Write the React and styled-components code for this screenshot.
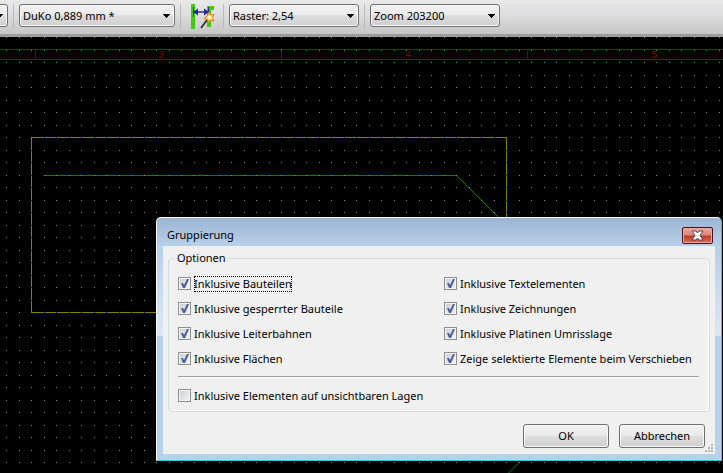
import * as React from "react";
import styled, {createGlobalStyle} from "styled-components";

const GlobalStyle = createGlobalStyle`
    * {
        box-sizing: border-box;
    }

    body {
        margin: 0;
        background: #000;
        color: #000;
    }

    body, select, button {
        font-family: "Noto Sans", "Open Sans", sans-serif;
        font-size: 11px;
        line-height: 16px;
    }
`;

const Page = styled.div`
    display: flex;
    flex-direction: column;
    min-height: 100vh;
    overflow: hidden;
`;

const Toolbar = styled.div`
    display: flex;
    flex: none;
    align-items: flex-start;
    gap: 5px;
    height: 37px;
    padding-top: 4px;
    overflow: hidden;
    background: linear-gradient(#e9e9e9, #dedee0 40%, #c6c6c6);
    border-bottom: 3px solid #9c9e9b;
`;

const Separator = styled.div`
    flex: none;
    width: 1px;
    height: 24px;
    background: #bababa;
`;

const Combo = styled.div`
    position: relative;
    flex: none;
    width: ${p => p.$width}px;
    margin-left: ${p => p.$clipped ? "-122px" : "0"};

    select {
        display: block;
        width: 100%;
        height: 23px;
        padding: 0 16px 0 3px;
        appearance: none;
        border: 1px solid #707070;
        border-radius: 3px;
        outline: none;
        background: linear-gradient(#f4f2f4, #ebebeb 48%, #dddddd 52%, #cfcfcf);
        box-shadow: inset 0 0 0 1px #f8f8f8;
        color: #000;
    }

    svg {
        position: absolute;
        top: 10px;
        right: 5px;
        pointer-events: none;
    }
`;

const ToolButton = styled.button`
    flex: none;
    width: 32px;
    height: 26px;
    padding: 0;
    border: none;
    background: none;

    svg {
        display: block;
        margin: 0 auto;
    }
`;

const Canvas = styled.div`
    position: relative;
    flex: 1;
    min-height: 436px;
    background: #000;
`;

const Board = styled.svg`
    position: absolute;
    top: 0;
    left: 0;
    width: 100%;
    height: 100%;

    text {
        font-family: "Liberation Mono", monospace;
        font-size: 10px;
        fill: #840000;
    }
`;

const Dialog = styled.section`
    position: absolute;
    top: 180px;
    left: 156px;
    width: 566px;
    padding: 0 6px 6px;
    border: 1px solid;
    border-color: #fff #35c8ee #35c8ee #fff;
    border-radius: 5px 5px 0 0;
    background: linear-gradient(#9bb5d3, #b9d0e9 28px, #dce8f5 118px, #b9d1ea 118px);
`;

const TitleBar = styled.header`
    display: flex;
    align-items: center;
    justify-content: space-between;
    height: 28px;
    padding: 6px 2px 0 4px;

    h1 {
        margin: 0;
        font-size: 11px;
        font-weight: normal;
    }
`;

const CloseButton = styled.button`
    display: flex;
    align-items: center;
    justify-content: center;
    width: 31px;
    height: 17px;
    padding: 0;
    border: 1px solid #431422;
    border-radius: 2px;
    background: linear-gradient(#eba89f, #dc8478 48%, #b93a24 52%, #d4705c);
    box-shadow: inset 0 0 0 1px #eba99f;
`;

const Content = styled.div`
    position: relative;
    padding-top: 4px;
    background: #f0f0f0;
`;

const Group = styled.fieldset`
    min-width: 0;
    margin: 0 5px;
    padding: 5px 10px 3px 9px;
    border: 1px solid #d0dbdb;
    border-radius: 4px;
    box-shadow: inset -1px -1px #fff;

    legend {
        height: 16px;
        margin-left: -3px;
        padding: 0 2px;
    }
`;

const Options = styled.div`
    display: grid;
    grid-template-columns: 1fr 1fr;
    grid-template-rows: repeat(4, 25px);
    grid-auto-flow: column;
    column-gap: 11px;
`;

const Option = styled.label`
    display: flex;
    align-items: center;
    gap: 3px;
    height: 25px;
    white-space: nowrap;

    span {
        outline: ${p => p.$focused ? "1px dotted #000" : "none"};
        outline-offset: -1px;
    }
`;

const CheckBox = styled.div`
    position: relative;
    flex: none;
    width: 13px;
    height: 13px;

    input {
        display: block;
        width: 13px;
        height: 13px;
        margin: 0;
        appearance: none;
        border: 1px solid #8e8f8f;
        outline: none;
        background: linear-gradient(135deg, #c8ccd2, #f6f6f6);
        box-shadow: inset 0 0 0 1px #f4f4f4;
    }

    svg {
        position: absolute;
        top: 0;
        left: 0;
        pointer-events: none;
    }
`;

const Rule = styled.hr`
    height: 2px;
    margin: 5px 0;
    border: none;
    border-top: 1px solid #a0a0a0;
    background: #fff;
`;

const Footer = styled.footer`
    display: flex;
    justify-content: flex-end;
    gap: 10px;
    padding: 12px 10px 6px;
`;

const Button = styled.button`
    width: 86px;
    height: 24px;
    padding: 0;
    border: 1px solid #707070;
    border-radius: 3px;
    background: linear-gradient(#f2f2f2, #ebebeb 48%, #dddddd 52%, #cfcfcf);
    box-shadow: inset 0 0 0 1px #f8f8f8;
    color: #000;
`;

const Grip = styled.svg`
    position: absolute;
    right: 2px;
    bottom: 2px;
`;

const combos = {
    track: "DuKo 0,889 mm *",
    raster: "Raster: 2,54",
    zoom: "Zoom 203200",
};

const options = [
    {label: "Inklusive Bauteilen", focused: true},
    {label: "Inklusive gesperrter Bauteile"},
    {label: "Inklusive Leiterbahnen"},
    {label: "Inklusive Flächen"},
    {label: "Inklusive Textelementen"},
    {label: "Inklusive Zeichnungen"},
    {label: "Inklusive Platinen Umrisslage"},
    {label: "Zeige selektierte Elemente beim Verschieben"},
];

const ToolCombo = ({name, text, width, clipped}) => (
    <Combo $width={width} $clipped={clipped}>
        <select aria-label={name}>
            <option>{text}</option>
        </select>
        <svg width="7" height="4" shapeRendering="crispEdges">
            <path d="M0 0H7V1H6V2H5V3H4V4H3V3H2V2H1V1H0Z"/>
        </svg>
    </Combo>
);

const TrackIcon = () => (
    <svg width="26" height="26" viewBox="0 0 26 26">
        <path d="M2 0H6V25H2Z M18 2H25V6H22V23H18Z" fill="#3fcb12"/>
        <path d="M4.5 3V13M19.5 3V12" stroke="#26357f"/>
        <path d="M5 8H19" stroke="#2b2b94" strokeWidth="1.5"/>
        <path d="M4 8L9 4.5V11.5Z M20 8L15 4.5V11.5Z" fill="#2b2b94"/>
        <path d="M12 24L18 16" stroke="#222" strokeWidth="1.6"/>
        <path d="M20 8L21.6 11L25 10.5L23.3 13.5L25 17L21.6 16.2L19.4 18.5L18.4 15.6L15 14.5L17.8 12.3Z"
              fill="#ffd84a" stroke="#e07818"/>
        <circle cx="20.4" cy="13.4" r="1.8" fill="#fff8d0"/>
    </svg>
);

const Check = ({label, checked, focused}) => (
    <Option $focused={focused}>
        <CheckBox>
            <input type="checkbox" defaultChecked={checked}/>
            {checked && (
                <svg width="13" height="13" viewBox="0 0 13 13">
                    <path d="M3 6L5 6L6 8L9 2L11 2L7 11L5 11Z" fill="#4a5f97"/>
                </svg>
            )}
        </CheckBox>
        <span>{label}</span>
    </Option>
);

// Canvas coordinates, the toolbar is not included
const PcbBoard = () => (
    <Board shapeRendering="crispEdges">
        <defs>
            <pattern id="grid" width="25" height="25" patternUnits="userSpaceOnUse">
                <path d="M6 0h1v1h-1zM19 0h1v1h-1zM6 13h1v1h-1zM19 13h1v1h-1z" fill="#8c8c8c"/>
            </pattern>
        </defs>
        <path d="M0 12.5H4000M0 22.5H4000M35.5 13V22M281.5 13V22M527.5 13V22"
              stroke="#840000" fill="none"/>
        <text x="158" y="21">3</text>
        <text x="405" y="21">4</text>
        <text x="651" y="21">5</text>
        <path d="M44 138.5H457" stroke="#008400" fill="none"/>
        <path d="M456.5 138.5L498 180M519.5 425L508.5 436" stroke="#008400" fill="none"
              shapeRendering="auto"/>
        <rect width="100%" height="100%" fill="url(#grid)"/>
        <rect x="31.5" y="100.5" width="475" height="175" stroke="#848400" fill="none"/>
        <path d="M44 100.5H506M44 275.5H506M31.5 113V275M506.5 113V275"
              stroke="#0000c0" strokeDasharray="1 11 1 12" fill="none"/>
    </Board>
);

const App = () => {
    return (
        <Page>
            <GlobalStyle/>
            <Toolbar>
                <ToolCombo name="Lage" text="" width={130} clipped/>
                <Separator/>
                <ToolCombo name="Durchkontaktierung" text={combos.track} width={156}/>
                <Separator/>
                <ToolButton type="button" aria-label="Leiterbahnbreite">
                    <TrackIcon/>
                </ToolButton>
                <Separator/>
                <ToolCombo name="Raster" text={combos.raster} width={130}/>
                <Separator/>
                <ToolCombo name="Zoom" text={combos.zoom} width={130}/>
            </Toolbar>
            <Canvas>
                <PcbBoard/>
                <Dialog role="dialog" aria-labelledby="dialog-title">
                    <TitleBar>
                        <h1 id="dialog-title">Gruppierung</h1>
                        <CloseButton type="button" aria-label="Schließen">
                            <svg width="13" height="11" viewBox="0 0 13 11">
                                <path d="M1 1H5L6.5 3L8 1H12L9 5.5L12 10H8L6.5 8L5 10H1L4 5.5Z"
                                      fill="#fff" stroke="#4a4a56"/>
                            </svg>
                        </CloseButton>
                    </TitleBar>
                    <Content>
                        <Group>
                            <legend>Optionen</legend>
                            <Options>
                                {options.map(o => (
                                    <Check key={o.label} label={o.label} focused={o.focused} checked/>
                                ))}
                            </Options>
                            <Rule/>
                            <Check label="Inklusive Elementen auf unsichtbaren Lagen"/>
                        </Group>
                        <Footer>
                            <Button type="button">OK</Button>
                            <Button type="button">Abbrechen</Button>
                        </Footer>
                        <Grip width="8" height="8" fill="#b4b4b4" shapeRendering="crispEdges">
                            <path d="M6 0h2v2h-2zM3 3h2v2h-2zM6 3h2v2h-2zM0 6h2v2h-2zM3 6h2v2h-2zM6 6h2v2h-2z"/>
                        </Grip>
                    </Content>
                </Dialog>
            </Canvas>
        </Page>
    );
};

export default App;
